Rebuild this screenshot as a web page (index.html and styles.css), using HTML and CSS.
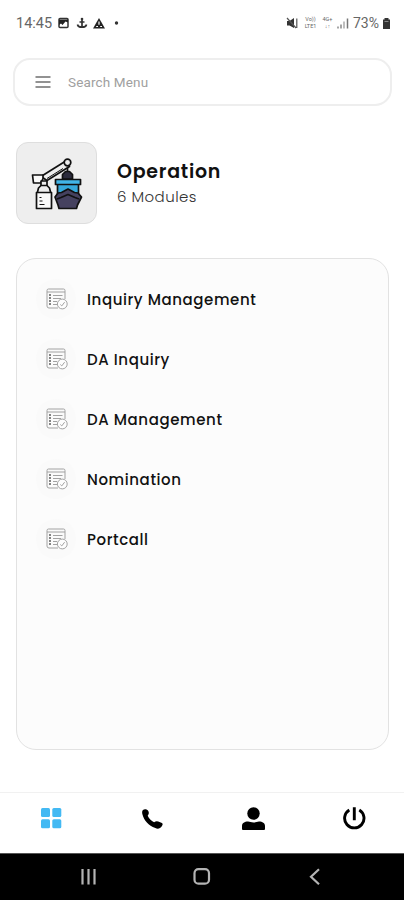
FILE: index.html
```html
<!DOCTYPE html>
<html lang="en">
<head>
<meta charset="utf-8">
<title>Operation</title>
<link rel="stylesheet" href="styles.css">
</head>
<body>
<svg class="defs" width="0" height="0">
  <symbol id="form" viewBox="0 0 22 22">
    <g fill="none" stroke="#a2a2a2" stroke-width="1">
      <path d="M12 20H3a2 2 0 0 1-2-2V2.500A1.500 1.500 0 0 1 2.500 1h15A1.500 1.500 0 0 1 19 2.500V11M1 4h18"/>
      <path d="M7 7.500h9.500M7 10.500h8M7 13.500h4M7 16.500h4"/>
      <path stroke="#777" stroke-width="1.800" stroke-dasharray="2 1" d="M4 6v12"/>
      <circle cx="16.300" cy="16" r="4.900" fill="#fdfdfd"/>
      <path d="m14.300 16.500 1.500 1.400 2.800-3.700"/>
    </g>
  </symbol>
</svg>
<header class="status">
  <span class="clock">14:45</span>
  <svg class="s-left" width="62" height="14" viewBox="0 0 62 14">
    <rect x="2" y="2.500" width="9" height="9" rx="1" fill="none" stroke="#333" stroke-width="1.500"/>
    <path d="M2 3.500h9v3L8.500 5.500l-3 3.500L4 7.500 2 9z" fill="#222"/>
    <circle cx="25" cy="3" r="1.300" fill="#333"/>
    <path d="M25 3.500v8M22.500 6h5M20.500 8.500c.6 3.600 8.400 3.600 9 0" fill="none" stroke="#333" stroke-width="1.700"/>
    <path d="M42 2 48 12.500H36z" fill="#222"/>
    <path d="M42 5.500v3.300M39.200 10.500H41M43.200 10.500H45" stroke="#fff" stroke-width="1.200"/>
    <circle cx="59.500" cy="7" r="1.700" fill="#333"/>
  </svg>
  <div class="s-right">
    <svg width="12" height="14" viewBox="0 0 12 14"><path d="M1 5h2.500L8 2v10L3.500 9.500H1z" fill="#333"/><path d="m1 2 9 10M10.800 2.500V12" stroke="#555" stroke-width="1.200"/></svg>
    <span class="tiny">Vo))<br>LTE1</span>
    <span class="tiny net">4G+<br>↓↑</span>
    <svg class="bars" width="12" height="14" viewBox="0 0 12 14"><path d="M1 10.500v2M4 8.500v4" stroke="#777" stroke-width="1.300"/><path d="M7 5.500v7" stroke="#aaa" stroke-width="1.500"/><path d="M10.500 2.500v10" stroke="#777" stroke-width="1.500"/></svg>
    <span class="pct">73%</span>
    <svg width="9" height="14" viewBox="0 0 9 14"><path d="M2.500 2h4v1.500H8V13H1V3.500h1.500z" fill="#333"/><path d="M2.500 5.500h4" stroke="#888"/></svg>
  </div>
</header>
<div class="search">
  <svg width="16" height="14" viewBox="0 0 16 14"><path d="M.5 2h15M.5 7h15M.5 12h15" stroke="#929292" stroke-width="2.200"/></svg>
  <span>Search Menu</span>
</div>
<section class="head">
  <div class="tile">
    <svg width="54" height="56" viewBox="0 0 54 56" stroke="#111" stroke-width="1.700" stroke-linejoin="round">
      <path d="M37.500 10v6" fill="none"/>
      <path d="M32.500 22v-4.500l3-3h4l3 3V22z" fill="#2c2b3c"/>
      <path d="M27.500 27h21v13h-21z" fill="#36a9dc"/>
      <path d="M25.500 22.500h25v5h-25z" fill="#41b5e8"/>
      <path d="m25 40 3-4 3.500-.5 6.500-3.500 6.500 3.500 3.500.5 3.500 4-4 8-1 3.500H29L28 48z" fill="#45415f"/>
      <path d="m27 42 4-1.500 7-3 7 3 4 1.500" fill="none"/>
      <path d="M11 19.500 35 4.500l4.500 5L17 23.500z" fill="#eee"/>
      <path d="m17 21.500 16-10" stroke-width="1"/>
      <circle cx="37.500" cy="5.500" r="3.300" fill="#eee"/>
      <path d="M2.500 18H13v3.500L11 26H3.500z" fill="#fafafa"/>
      <path d="M11 24h6v5h-6z" fill="#eee"/>
      <path d="m7 37 1.500-6 2.500-2.500h6l2.500 2.500L21 37z" fill="#eee"/>
      <path d="M6.500 35.500h15v16h-15z" fill="#fafafa"/>
      <path d="M9.500 40.500h2M9.500 44h3M9.500 47.500h5" stroke-width="1.200"/>
    </svg>
  </div>
  <div class="titles">
    <h1>Operation</h1>
    <p>6 Modules</p>
  </div>
</section>
<main class="panel">
  <div class="row"><i><svg width="22" height="22"><use href="#form"/></svg></i><span>Inquiry Management</span></div>
  <div class="row"><i><svg width="22" height="22"><use href="#form"/></svg></i><span>DA Inquiry</span></div>
  <div class="row"><i><svg width="22" height="22"><use href="#form"/></svg></i><span>DA Management</span></div>
  <div class="row"><i><svg width="22" height="22"><use href="#form"/></svg></i><span>Nomination</span></div>
  <div class="row"><i><svg width="22" height="22"><use href="#form"/></svg></i><span>Portcall</span></div>
</main>
<nav class="tabs">
  <svg width="24" height="24" viewBox="0 0 24 24" fill="#43b9f3"><rect x="2" y="1" width="9" height="9" rx="1.500"/><rect x="13.300" y="1" width="9" height="9" rx="1.500"/><rect x="2" y="12.300" width="9" height="9" rx="1.500"/><rect x="13.300" y="12.300" width="9" height="9" rx="1.500"/></svg>
  <svg width="24" height="24" viewBox="0 0 24 24"><path d="M3 3C4.200 1.600 7.300 2 8.300 4c.9 2 .6 3.200-.6 4.700 1.200 2.900 3.500 5.100 6.400 6.500 2-1.200 3.400-1 6 0l1.900.9c1.100.8.700 2-.2 3.200-1.500 2.400-4 2.900-6.500 1.800C8.500 18.200 4 13.700 2.400 7.200 2 5.500 2 4 3 3z"/></svg>
  <svg width="24" height="24" viewBox="0 0 24 24"><circle cx="12.500" cy="6.500" r="6.200"/><path d="M1 22v-3c0-3 2.500-4.500 6-4.500 2 0 3 1 5.500 1s3.500-1 5.500-1c3.500 0 6 1.500 6 4.500v3q0 1-1 1H2q-1 0-1-1z"/></svg>
  <svg width="24" height="24" viewBox="0 0 24 24" fill="none" stroke="#000" stroke-width="2.900"><path d="M7.300 2.900a9.700 9.700 0 1 0 10 0M12.300 .3v13"/></svg>
</nav>
<footer class="system">
  <svg width="18" height="18" viewBox="0 0 18 18" stroke="#b4b4b4" stroke-width="2.200"><path d="M2.500 1v15.500M8.500 1v15.500M14.500 1v15.500"/></svg>
  <svg width="18" height="18" viewBox="0 0 18 18" fill="none" stroke="#b4b4b4" stroke-width="2.200"><rect x="1.500" y="1.200" width="14.500" height="14.500" rx="4"/></svg>
  <svg width="18" height="18" viewBox="0 0 18 18" fill="none" stroke="#b4b4b4" stroke-width="2.200"><path d="m13 1.200-8 7.500 8 7.500"/></svg>
</footer>
</body>
</html>
```
FILE: styles.css
```css
* { box-sizing: border-box; }
body {
  margin: 0;
  width: 404px;
  height: 900px;
  display: flex;
  flex-direction: column;
  background: #fff;
  font-family: Poppins, Inter, sans-serif;
  color: #111;
  overflow: hidden;
}
svg { display: block; flex: none; }
.defs { position: absolute; }
.status {
  height: 46px;
  padding: 0 13px 0 16px;
  display: flex;
  align-items: center;
  font-family: Roboto, sans-serif;
  color: #666;
}
.clock { font-size: 14.5px; width: 41px; }
.s-right { margin-left: auto; display: flex; align-items: center; }
.tiny {
  width: 15px;
  margin-left: 5px;
  font-size: 5.5px;
  line-height: 7px;
  text-align: center;
  color: #666;
}
.net { width: 13px; margin-left: 3px; }
.bars { margin-left: 3px; }
.pct { font-size: 14px; margin-left: 4px; width: 29px; }
.search {
  height: 48px;
  margin: 12px 12px 0 13px;
  padding-left: 20px;
  display: flex;
  align-items: center;
  gap: 17px;
  border: 2px solid #eee;
  border-radius: 17px;
  font-family: Roboto, sans-serif;
  font-size: 13.5px;
  letter-spacing: .15px;
  color: #a0a0a0;
}
.head { margin: 36px 16px 0; display: flex; gap: 20px; }
.tile {
  width: 81px;
  height: 82px;
  padding: 14px 0 0 13px;
  background: #eee;
  border: 1.5px solid #dedede;
  border-radius: 12px;
}
.titles { padding-top: 17px; }
h1 { margin: 0; font-size: 19px; line-height: 26px; font-weight: 600; letter-spacing: .75px; }
p { margin: 0; font-size: 15px; line-height: 24px; font-weight: 300; letter-spacing: .45px; color: #333; }
.panel {
  height: 492px;
  margin: 34px 15px 0 16px;
  padding: 10px 0 0 19px;
  background: #fcfcfc;
  border: 1.5px solid #e2e2e2;
  border-radius: 20px;
}
.row {
  height: 60.1px;
  display: flex;
  align-items: center;
  gap: 11px;
  font-size: 15px;
  font-weight: 500;
  letter-spacing: .59px;
}
.row i {
  width: 40px;
  height: 40px;
  padding: 9px 0 0 10px;
  border-radius: 50%;
  background: #fafafa;
}
.tabs {
  height: 61px;
  margin-top: auto;
  padding-bottom: 9px;
  display: grid;
  grid-template-columns: repeat(4, 101px);
  place-items: center;
  border-top: 1px solid #f1f1f1;
}
.system {
  height: 47px;
  padding: 0 32px;
  display: grid;
  grid-template-columns: repeat(3, 1fr);
  place-items: center;
  background: #000;
  border-top: 1px solid #555;
}
```
